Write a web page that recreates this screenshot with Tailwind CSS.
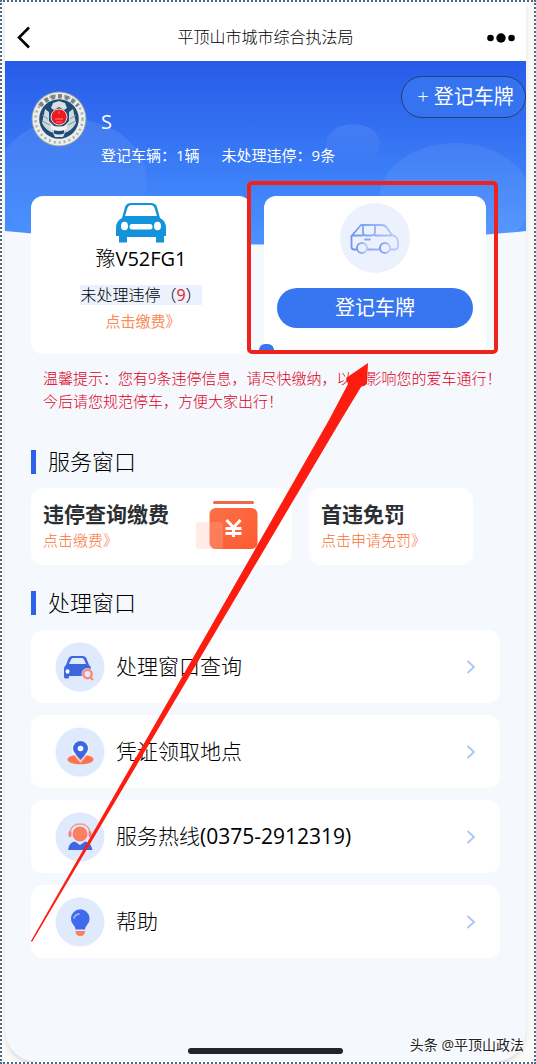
<!DOCTYPE html>
<html lang="zh-CN">
<head>
<meta charset="utf-8">
<meta name="viewport" content="width=device-width, initial-scale=1">
<title>平顶山市城市综合执法局</title>
<script src="https://cdn.jsdelivr.net/npm/@tailwindcss/browser@4"></script>
</head>
<body class="bg-[#fafaf8] font-['Open_Sans','Noto_Sans_CJK_SC',sans-serif] font-light text-black">
<div class="relative flex min-h-screen flex-col overflow-hidden border-2 border-dotted border-[#4f6a88] pr-2 pl-[3px]">
  <div class="relative flex flex-1 flex-col overflow-hidden rounded-b-[32px] bg-[#f5f9fe] shadow-md">
    <header class="relative flex h-[59px] items-center justify-center bg-white pt-[10px]">
      <button aria-label="返回" class="absolute top-6 left-3 h-6 w-4">
        <svg viewBox="0 0 16 24" class="h-6 w-4" fill="none" stroke="#000" stroke-width="2.6"><path d="M12 1.500L2 11.500L12 21.500"/></svg>
      </button>
      <h1 class="text-base leading-6">平顶山市城市综合执法局</h1>
      <button aria-label="更多" class="absolute top-7 right-[11px] h-4 w-7">
        <svg viewBox="0 0 28 16" class="h-4 w-7"><circle cx="3.500" cy="8" r="3.300"/><circle cx="14" cy="8" r="4.700"/><circle cx="24.500" cy="8" r="3.300"/></svg>
      </button>
    </header>

    <main class="relative flex flex-1 flex-col">
      <svg class="absolute inset-x-0 top-0 h-[184px] w-full" viewBox="0 0 521 184" preserveAspectRatio="none" aria-hidden="true">
        <defs>
          <linearGradient id="sky" x1="0" y1="0" x2="0" y2="1"><stop offset="0" stop-color="#275be8"/><stop offset=".65" stop-color="#3d80f8"/><stop offset="1" stop-color="#4c93ff"/></linearGradient>
          <linearGradient id="bub" x1="0" y1="0" x2="0" y2="1"><stop offset="0" stop-color="#fff" stop-opacity=".09"/><stop offset="1" stop-color="#fff" stop-opacity="0"/></linearGradient>
          <clipPath id="hero"><path d="M0 0H521V170Q260 197 0 170Z"/></clipPath>
        </defs>
        <g clip-path="url(#hero)">
          <rect width="521" height="184" fill="url(#sky)"/>
          <ellipse cx="66" cy="120" rx="76" ry="62" fill="url(#bub)"/>
          <ellipse cx="348" cy="83" rx="27" ry="20" fill="url(#bub)"/>
          <ellipse cx="450" cy="138" rx="76" ry="56" fill="#fff" fill-opacity=".07"/>
        </g>
      </svg>

      <button class="absolute top-[15px] right-0 h-[42px] w-[125px] rounded-full border border-[#26406f] bg-[#3573f0] pl-1 text-xl font-normal text-white"><span class="font-light">+</span> 登记车牌</button>

      <section class="relative flex gap-[14px] pt-[30px] pl-[26px] text-white">
        <svg viewBox="0 0 56 56" class="size-14 shrink-0" role="img" aria-label="执法徽章">
          <circle cx="28" cy="28" r="27.500" fill="#8f9ea8"/>
          <circle cx="28" cy="28" r="26.500" fill="#eceeec"/>
          <circle cx="28" cy="28" r="23.500" fill="none" stroke="#a9b0b0" stroke-width="2.500" stroke-dasharray="2 3"/>
          <path d="M9 15A23.500 23.500 0 0 1 47 15" fill="none" stroke="#7b8583" stroke-width="4.500" stroke-dasharray="4 3"/>
          <circle cx="28" cy="28" r="19.800" fill="#1f4c75"/>
          <path d="M22 12l6-2 6 2 2 5-3 2-5-3-5 3-3-2z" fill="#d9e0e2"/>
          <path d="M14 18l4 3v9l5 5v7q-8-2-12-10zM42 18l-4 3v9l-5 5v7q8-2 12-10z" fill="#cfd8dc"/>
          <path d="M11 24l6 4M11 30l8 4M45 24l-6 4M45 30l-8 4" stroke="#7f97a8" stroke-width="1"/>
          <path d="M20 34q8 3 16 0v4q-8 4-16 0z" fill="#f2f4f4"/>
          <path d="M22 42q6 3 12 0l-2 4h-8z" fill="#dfe5e7"/>
          <circle cx="28" cy="26" r="8" fill="#ed1920" stroke="#f0d5d5" stroke-width="1"/>
          <path d="M24 28h8M25 31h6M28 20.500v2" stroke="#ff8078" stroke-width="1.200"/>
        </svg>
        <div class="pt-[17px] font-normal">
          <p class="text-xl leading-7">S</p>
          <p class="mt-[9px] flex gap-[22px] text-[15px] leading-5"><span>登记车辆：1辆</span><span>未处理违停：9条</span></p>
        </div>
      </section>

      <section class="relative mt-[31px] mr-10 ml-[26px] grid grid-cols-[220fr_222fr] gap-[13px]">
        <article class="flex h-[158px] flex-col items-center rounded-xl bg-white pt-[6px]">
          <svg viewBox="0 0 50 41" class="h-[41px] w-[50px] shrink-0" aria-hidden="true">
            <path d="M6 16L9 5Q10.500 1 15 1H35Q39.500 1 41 5L44 16Q50 19 50 26V34H48V40.500H40V35H11V40.500H3V34H0V26Q0 19 6 16Z" fill="#1293dc"/>
            <path d="M9 14L11.500 6Q12.500 3 15.500 3H34.500Q37.500 3 38.500 6L41 14Z" fill="#fff"/>
            <ellipse cx="8.500" cy="24" rx="3.500" ry="4.300" fill="#fff"/><ellipse cx="41.500" cy="24" rx="3.500" ry="4.300" fill="#fff"/>
            <rect x="13.500" y="22" width="23" height="5.500" rx="2.500" fill="#fff"/>
          </svg>
          <h2 class="text-xl leading-8">豫<span class="font-normal">V52FG1</span></h2>
          <p class="mt-[10px] bg-[#ecf1fe] text-base leading-5">未处理违停（<span class="font-normal text-[#e3202c]">9</span>）</p>
          <a href="#pay" class="mt-[6px] pl-1 text-[15px] leading-5 font-normal text-[#fb8a58]">点击缴费》</a>
        </article>
        <article class="flex h-[158px] flex-col items-center rounded-xl bg-white px-[13px] pt-[7px]">
          <svg viewBox="0 0 70 70" class="size-[70px] shrink-0" aria-hidden="true">
            <defs><linearGradient id="van" x1="0" y1="0" x2="1" y2="0"><stop offset="0" stop-color="#7095f1"/><stop offset="1" stop-color="#b9cbfa"/></linearGradient></defs>
            <circle cx="35" cy="35" r="35" fill="#ecf1fe"/>
            <g fill="none" stroke="url(#van)" stroke-width="1.800" stroke-linejoin="round" stroke-linecap="round">
              <path d="M16.500 46.500H14Q11.500 46.500 11.500 43.500V33L21 22H42Q45 22 47 25L52 32Q58 33.500 58 39V43Q58 46.500 55 46.500H50.500M40 46.500H27M12 32.500H23M35 32.500H52M23 22V29Q23 32.500 26 32.500H31Q35 32.500 35 29V22M25 36.500H30"/>
              <circle cx="22" cy="45" r="5"/><circle cx="45" cy="45" r="5"/>
            </g>
          </svg>
          <button class="mt-[15px] h-10 w-full rounded-full bg-[#3776f0] text-xl font-normal text-white">登记车牌</button>
        </article>
        <span class="absolute bottom-1 left-1/2 h-[6px] w-[15px] rounded-t-md bg-[#3776f0]"></span>
      </section>

      <p class="relative mt-[13px] ml-[38px] text-[15px] leading-[23px] whitespace-nowrap text-[#de0020]">温馨提示：您有9条违停信息，请尽快缴纳，以免影响您的爱车通行！<br>今后请您规范停车，方便大家出行！</p>

      <h2 class="mt-[37px] ml-[26px] flex h-6 items-center gap-3 text-[22px] leading-6"><span class="h-6 w-[5px] bg-[#2d62e8]"></span><span class="pb-[3px]">服务窗口</span></h2>
      <section class="mt-[14px] mr-[53px] ml-[26px] grid grid-cols-[261fr_164fr] gap-[17px]">
        <a href="#query" class="flex h-[77px] min-w-0 justify-between rounded-xl bg-white pt-3 pr-[34px] pl-3">
          <span class="flex flex-col whitespace-nowrap">
            <strong class="text-[21px] leading-7 font-bold text-[#2b2f33]">违停查询缴费</strong>
            <span class="mt-[2px] text-[15px] leading-5 text-[#fb7038]">点击缴费》</span>
          </span>
          <svg viewBox="0 0 62 50" class="h-[50px] w-[62px] shrink-0" aria-hidden="true">
            <defs><linearGradient id="pay" x1="0" y1="0" x2="1" y2="1"><stop offset="0" stop-color="#fb7048"/><stop offset="1" stop-color="#ff5a31"/></linearGradient></defs>
            <rect x="17" y="1" width="41" height="3" rx="1.500" fill="#f0694b"/>
            <rect x="13.500" y="8" width="48" height="41" rx="6" fill="url(#pay)"/>
            <rect x="0" y="22" width="27" height="27" rx="3" fill="#ffb8a5" fill-opacity=".27"/>
            <path d="M30.500 20L37.500 27.500L44.500 20M37.500 27.500V37M29.500 28.500H45.500M29.500 33.500H45.500" fill="none" stroke="#fff" stroke-width="3"/>
          </svg>
        </a>
        <a href="#waive" class="flex h-[77px] min-w-0 flex-col rounded-xl bg-white pt-3 pl-3 whitespace-nowrap">
          <strong class="text-[21px] leading-7 font-bold text-[#2b2f33]">首违免罚</strong>
          <span class="mt-[2px] text-[15px] leading-5 text-[#fb7038]">点击申请免罚》</span>
        </a>
      </section>

      <h2 class="mt-[26px] ml-[26px] flex h-6 items-center gap-3 text-[22px] leading-6"><span class="h-6 w-[5px] bg-[#2d62e8]"></span><span class="pb-[3px]">处理窗口</span></h2>
      <nav class="mx-[26px] mt-[15px] flex flex-col gap-3 text-[21px] leading-7">
        <a href="#window" class="flex h-[73px] items-center rounded-xl bg-white px-6">
          <svg viewBox="0 0 50 50" class="size-[50px]" aria-hidden="true">
            <circle cx="25" cy="25" r="24.500" fill="#e0eafd"/>
            <path d="M11 23L13.500 16.500Q14.500 14 17 14H28Q30.500 14 31.500 16.500L34 23Q36 24 36 27V34H14V35Q14 36.500 12.500 36.500H11Q9 36.500 9 35V27Q9 24 11 23Z" fill="#3b68df"/>
            <path d="M14 22L16 17.500Q16.500 16 18 16H27Q28.500 16 29 17.500L31 22Z" fill="#e0eafd"/>
            <ellipse cx="12.500" cy="29.500" rx="2" ry="2.300" fill="#fff"/>
            <circle cx="32.500" cy="32" r="6" fill="#e0eafd"/><circle cx="32.500" cy="32" r="4.200" fill="none" stroke="#f98b7b" stroke-width="2.500"/><path d="M35.500 35.500L38 38" stroke="#f98b7b" stroke-width="2.300"/>
          </svg>
          <span class="ml-[11px] flex-1 pb-[2px]">处理窗口查询</span>
          <svg viewBox="0 0 10 16" class="h-4 w-[10px]" fill="none" stroke="#a9c5fa" stroke-width="1.800"><path d="M1.500 2L8 8L1.500 14"/></svg>
        </a>
        <a href="#place" class="flex h-[73px] items-center rounded-xl bg-white px-6">
          <svg viewBox="0 0 50 50" class="size-[50px]" aria-hidden="true">
            <circle cx="25" cy="25" r="24.500" fill="#e0eafd"/>
            <ellipse cx="25.500" cy="32.500" rx="13" ry="4.800" fill="#fb7351"/>
            <path d="M25.500 36L17 25.500Q15 14 25.500 13.500Q36 14 34 25.500Z" fill="#fff" fill-opacity=".65"/>
            <path d="M25.500 33Q18 25 18 21.500A7.500 7.500 0 0 1 33 21.500Q33 25 25.500 33Z" fill="#3d66e4"/>
            <circle cx="25.500" cy="21.500" r="2.800" fill="#fff"/>
          </svg>
          <span class="ml-[11px] flex-1 pb-[2px]">凭证领取地点</span>
          <svg viewBox="0 0 10 16" class="h-4 w-[10px]" fill="none" stroke="#a9c5fa" stroke-width="1.800"><path d="M1.500 2L8 8L1.500 14"/></svg>
        </a>
        <a href="tel:0375-2912319" class="flex h-[73px] items-center rounded-xl bg-white px-6">
          <svg viewBox="0 0 50 50" class="size-[50px]" aria-hidden="true">
            <circle cx="25" cy="25" r="24.500" fill="#e0eafd"/>
            <path d="M13 38Q14 30 20 29.500L25 33L30 29.500Q36 30 37.500 38Z" fill="#3d66e4"/>
            <circle cx="25" cy="22.500" r="8.500" fill="#e0eafd"/>
            <circle cx="25" cy="22" r="7.500" fill="#fb8060"/>
            <path d="M15 21Q16 12 25 12T35 21" fill="none" stroke="#f3a08f" stroke-width="1.500"/>
            <rect x="13.500" y="19" width="3" height="6" rx="1.500" fill="#ef8377"/><rect x="33.500" y="19" width="3" height="6" rx="1.500" fill="#ef8377"/>
          </svg>
          <span class="ml-[11px] flex-1 pb-[2px]">服务热线<span class="font-normal">(0375-2912319)</span></span>
          <svg viewBox="0 0 10 16" class="h-4 w-[10px]" fill="none" stroke="#a9c5fa" stroke-width="1.800"><path d="M1.500 2L8 8L1.500 14"/></svg>
        </a>
        <a href="#help" class="flex h-[73px] items-center rounded-xl bg-white px-6">
          <svg viewBox="0 0 50 50" class="size-[50px]" aria-hidden="true">
            <circle cx="25" cy="25" r="24.500" fill="#e0eafd"/>
            <path d="M20.500 32.500Q20.500 30 18.500 28A9.300 9.300 0 1 1 32 28Q30 30 30 32.500Z" fill="#3f6aec"/>
            <path d="M19 21Q20 17.500 24 17" fill="none" stroke="#a9c1fb" stroke-width="1.500" stroke-linecap="round"/>
            <path d="M20.500 34H30Q30 39 25.200 39T20.500 34Z" fill="#fb8060"/>
          </svg>
          <span class="ml-[11px] flex-1 pb-[2px]">帮助</span>
          <svg viewBox="0 0 10 16" class="h-4 w-[10px]" fill="none" stroke="#a9c5fa" stroke-width="1.800"><path d="M1.500 2L8 8L1.500 14"/></svg>
        </a>
      </nav>
      <div class="mx-auto mt-auto mb-2 h-[6px] w-[155px] rounded-full bg-[#20262b]"></div>
    </main>
  </div>

  <!-- Callout frame and arrow pointing at the registration card -->
  <svg class="pointer-events-none absolute -top-[2px] -left-[2px] h-[1064px] w-[536px]" viewBox="0 0 536 1064" aria-hidden="true">
    <rect x="249" y="183" width="247" height="169" rx="3" fill="none" stroke="#f0231c" stroke-width="4"/>
    <path d="M31 941L329 420L348 384L346 378L368 363L367 384L361 387L341 420L32 942Z" fill="#fc1d10"/>
  </svg>
  <p class="absolute right-[10px] bottom-[7px] text-sm leading-5 font-normal text-[#222] [text-shadow:1px_1px_0_#fff,-1px_-1px_0_#fff]">头条 @平顶山政法</p>
</div>
</body>
</html>
